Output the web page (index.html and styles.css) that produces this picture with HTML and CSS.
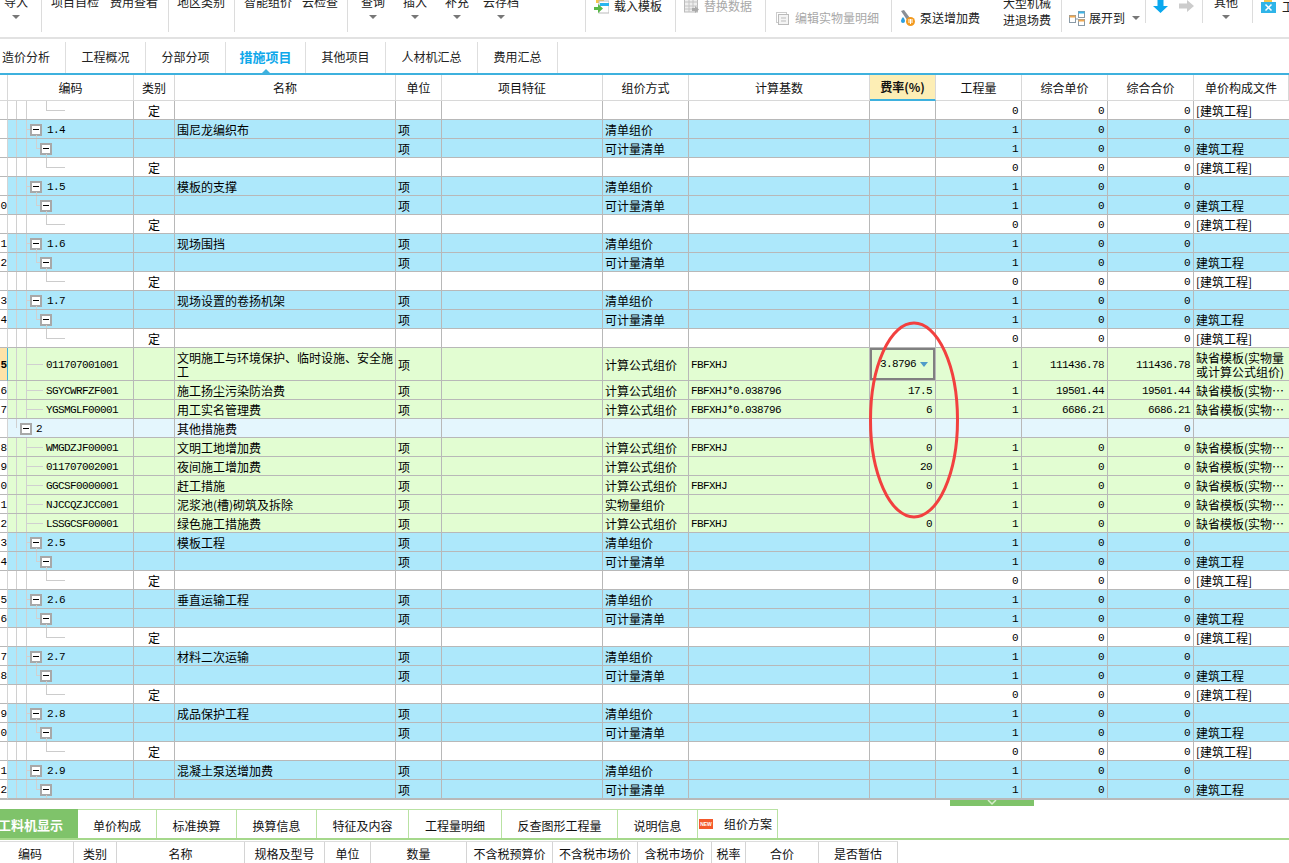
FILE: index.html
```html
<!DOCTYPE html>
<html lang="zh">
<head>
<meta charset="utf-8">
<title>措施项目</title>
<link rel="stylesheet" href="styles.css">
</head>
<body>
<header class="toolbar">
  <div class="grp g1"><div class="it"><span>导入</span><b class="arr"></b></div></div>
  <div class="grp g2"><div class="it"><span>项目自检</span></div><div class="it"><span>费用查看</span></div></div>
  <div class="grp g3"><div class="it"><span>地区类别</span></div></div>
  <div class="grp g4"><div class="it"><span>智能组价</span></div><div class="it"><span>云检查</span></div></div>
  <div class="grp g5"><div class="it two"><span>查询</span><b class="arr"></b></div><div class="it two"><span>插入</span><b class="arr"></b></div><div class="it two"><span>补充</span><b class="arr"></b></div><div class="it last"><span>云存档</span><b class="arr"></b></div></div>
  <div class="grp g6"><div class="row high">
    <svg width="15" height="16" viewBox="0 0 15 16"><rect x="2" y="0" width="8" height="5" fill="#f6c54a"/><rect x="5" y="3" width="10" height="12" fill="#fff" stroke="#bbb"/><rect x="6" y="5" width="9" height="3" fill="#29b6ee"/><path d="M0 9h4v-3l5 4.5-5 4.5v-3H0z" fill="#58b947"/></svg>
    <span>载入模板</span></div></div>
  <div class="grp g7"><div class="row high dis">
    <svg width="15" height="16" viewBox="0 0 15 16"><rect x=".5" y="-1" width="13" height="15" fill="#eee" stroke="#bbb"/><path d="M1 4h13M1 8h13M1 11h8M5 0v14M9 0v10" stroke="#c4c4c4"/><path d="M8 10h3V8l4 3.5-4 3.5v-2H8z" fill="#aaa"/></svg>
    <span>替换数据</span></div></div>
  <div class="grp g8"><div class="row low dis">
    <svg width="13" height="13" viewBox="0 0 13 13"><rect x=".5" y=".5" width="10" height="10" fill="#fff" stroke="#ccc"/><rect x="2.5" y="2.5" width="10" height="10" fill="#f4f4f4" stroke="#bbb"/><path d="M5 6h5M5 9h5" stroke="#bbb"/></svg>
    <span>编辑实物量明细</span></div></div>
  <div class="grp g9"><div class="row low pump">
    <svg width="15" height="16" viewBox="0 0 15 16"><path d="M1 1l3-1 6 8-3 2z" fill="#8a8f96"/><path d="M3 7c1.500 2 2 3 2 4a2 2 0 0 1-4 0c0-1 .5-2 2-4z" fill="#2a9fe0"/><circle cx="10.500" cy="11.500" r="4.500" fill="#f29a1f"/><path d="M8 10h5M8 12h5M10.500 9v5" stroke="#fff"/></svg>
    <span>泵送增加费</span></div>
    <div class="stack"><span>大型机械</span><span>进退场费</span></div></div>
  <div class="grp g10 short"><div class="row low">
    <svg width="16" height="15" viewBox="0 0 16 15"><rect x=".5" y="4.500" width="6" height="7" fill="#fff" stroke="#8a9aa6"/><rect x=".5" y="4.500" width="6" height="2" fill="#f0a850"/><rect x="9.500" y=".5" width="6" height="6" fill="#fff" stroke="#8a9aa6"/><rect x="9.500" y=".5" width="6" height="2" fill="#3db4e8"/><rect x="9.500" y="8.500" width="6" height="6" fill="#fff" stroke="#8a9aa6"/><rect x="9.500" y="8.500" width="6" height="2" fill="#f0a850"/><path d="M7 8h2" stroke="#8a9aa6"/></svg>
    <span>展开到</span></div><b class="arr side"></b></div>
  <div class="grp g11 short">
    <svg width="15" height="13" viewBox="0 0 15 13"><path d="M4.500 0h6v6H15l-7.500 7L0 6h4.500z" fill="#0aa8ee"/></svg>
    <svg width="15" height="12" viewBox="0 0 15 12"><path d="M0 3.500h8V0l7 6-7 6V8.500H0z" fill="#ccc"/></svg>
  </div>
  <div class="grp g12 short"><div class="it"><span>其他</span><b class="arr"></b></div></div>
  <div class="grp g13"><div class="row mid">
    <svg width="15" height="16" viewBox="0 0 15 16"><rect x="3" y="0" width="8" height="4" fill="#f6c54a"/><rect x="0" y="3" width="15" height="11" fill="#2fb4e8"/><path d="M4.500 5.500l6 6M10.500 5.500l-6 6" stroke="#fff" stroke-width="1.500"/></svg>
    <span>工程</span></div></div>
</header>

<nav class="tabs">
  <div class="tab first">造价分析</div>
  <div class="tab">工程概况</div>
  <div class="tab">分部分项</div>
  <div class="tab on">措施项目</div>
  <div class="tab">其他项目</div>
  <div class="tab wide">人材机汇总</div>
  <div class="tab">费用汇总</div>
</nav>

<main class="grid">
<table>
<colgroup><col class="c0"><col class="c1"><col class="c2"><col class="c3"><col class="c4"><col class="c5"><col class="c6"><col class="c7"><col class="c8"><col class="c9"><col class="c9"><col class="c9"><col class="c10"></colgroup>
<thead><tr><th></th><th>编码</th><th>类别</th><th>名称</th><th>单位</th><th>项目特征</th><th>组价方式</th><th>计算基数</th><th class="hl">费率(%)</th><th>工程量</th><th>综合单价</th><th>综合合价</th><th>单价构成文件</th></tr></thead>
<tbody>
<tr class="def"><td class="gut"></td><td class="cd"></td><td class="ct">定</td><td></td><td></td><td></td><td></td><td></td><td></td><td class="n">0</td><td class="n">0</td><td class="n">0</td><td>[建筑工程]</td></tr>
<tr class="blue"><td class="gut"></td><td class="cd top"><i class="box"></i>1.4</td><td></td><td>围尼龙编织布</td><td>项</td><td></td><td>清单组价</td><td></td><td></td><td class="n">1</td><td class="n">0</td><td class="n">0</td><td></td></tr>
<tr class="blue"><td class="gut"></td><td class="cd sub"><i class="box"></i></td><td></td><td></td><td>项</td><td></td><td>可计量清单</td><td></td><td></td><td class="n">1</td><td class="n">0</td><td class="n">0</td><td>建筑工程</td></tr>
<tr class="def"><td class="gut"></td><td class="cd"></td><td class="ct">定</td><td></td><td></td><td></td><td></td><td></td><td></td><td class="n">0</td><td class="n">0</td><td class="n">0</td><td>[建筑工程]</td></tr>
<tr class="blue"><td class="gut"></td><td class="cd top"><i class="box"></i>1.5</td><td></td><td>模板的支撑</td><td>项</td><td></td><td>清单组价</td><td></td><td></td><td class="n">1</td><td class="n">0</td><td class="n">0</td><td></td></tr>
<tr class="blue"><td class="gut">0</td><td class="cd sub"><i class="box"></i></td><td></td><td></td><td>项</td><td></td><td>可计量清单</td><td></td><td></td><td class="n">1</td><td class="n">0</td><td class="n">0</td><td>建筑工程</td></tr>
<tr class="def"><td class="gut"></td><td class="cd"></td><td class="ct">定</td><td></td><td></td><td></td><td></td><td></td><td></td><td class="n">0</td><td class="n">0</td><td class="n">0</td><td>[建筑工程]</td></tr>
<tr class="blue"><td class="gut">1</td><td class="cd top"><i class="box"></i>1.6</td><td></td><td>现场围挡</td><td>项</td><td></td><td>清单组价</td><td></td><td></td><td class="n">1</td><td class="n">0</td><td class="n">0</td><td></td></tr>
<tr class="blue"><td class="gut">2</td><td class="cd sub"><i class="box"></i></td><td></td><td></td><td>项</td><td></td><td>可计量清单</td><td></td><td></td><td class="n">1</td><td class="n">0</td><td class="n">0</td><td>建筑工程</td></tr>
<tr class="def"><td class="gut"></td><td class="cd"></td><td class="ct">定</td><td></td><td></td><td></td><td></td><td></td><td></td><td class="n">0</td><td class="n">0</td><td class="n">0</td><td>[建筑工程]</td></tr>
<tr class="blue"><td class="gut">3</td><td class="cd top"><i class="box"></i>1.7</td><td></td><td>现场设置的卷扬机架</td><td>项</td><td></td><td>清单组价</td><td></td><td></td><td class="n">1</td><td class="n">0</td><td class="n">0</td><td></td></tr>
<tr class="blue"><td class="gut">4</td><td class="cd sub"><i class="box"></i></td><td></td><td></td><td>项</td><td></td><td>可计量清单</td><td></td><td></td><td class="n">1</td><td class="n">0</td><td class="n">0</td><td>建筑工程</td></tr>
<tr class="def"><td class="gut"></td><td class="cd"></td><td class="ct">定</td><td></td><td></td><td></td><td></td><td></td><td></td><td class="n">0</td><td class="n">0</td><td class="n">0</td><td>[建筑工程]</td></tr>
<tr class="green tall"><td class="gut cur">5</td><td class="cd item">011707001001</td><td></td><td class="wrap">文明施工与环境保护、临时设施、安全施工</td><td>项</td><td></td><td>计算公式组价</td><td class="m">FBFXHJ</td><td class="sel"><div class="selbox">3.8796<b class="tri"></b></div></td><td class="n">1</td><td class="n">111436.78</td><td class="n">111436.78</td><td class="wrap">缺省模板(实物量或计算公式组价)</td></tr>
<tr class="green"><td class="gut">6</td><td class="cd item">SGYCWRFZF001</td><td></td><td>施工扬尘污染防治费</td><td>项</td><td></td><td>计算公式组价</td><td class="m">FBFXHJ*0.038796</td><td class="n">17.5</td><td class="n">1</td><td class="n">19501.44</td><td class="n">19501.44</td><td>缺省模板(实物⋯</td></tr>
<tr class="green"><td class="gut">7</td><td class="cd item">YGSMGLF00001</td><td></td><td>用工实名管理费</td><td>项</td><td></td><td>计算公式组价</td><td class="m">FBFXHJ*0.038796</td><td class="n">6</td><td class="n">1</td><td class="n">6686.21</td><td class="n">6686.21</td><td>缺省模板(实物⋯</td></tr>
<tr class="pale"><td class="gut"></td><td class="cd lvl"><i class="box"></i>2</td><td></td><td>其他措施费</td><td></td><td></td><td></td><td></td><td></td><td></td><td></td><td class="n">0</td><td></td></tr>
<tr class="green"><td class="gut">8</td><td class="cd item">WMGDZJF00001</td><td></td><td>文明工地增加费</td><td>项</td><td></td><td>计算公式组价</td><td class="m">FBFXHJ</td><td class="n">0</td><td class="n">1</td><td class="n">0</td><td class="n">0</td><td>缺省模板(实物⋯</td></tr>
<tr class="green"><td class="gut">9</td><td class="cd item">011707002001</td><td></td><td>夜间施工增加费</td><td>项</td><td></td><td>计算公式组价</td><td></td><td class="n">20</td><td class="n">1</td><td class="n">0</td><td class="n">0</td><td>缺省模板(实物⋯</td></tr>
<tr class="green"><td class="gut">0</td><td class="cd item">GGCSF0000001</td><td></td><td>赶工措施</td><td>项</td><td></td><td>计算公式组价</td><td class="m">FBFXHJ</td><td class="n">0</td><td class="n">1</td><td class="n">0</td><td class="n">0</td><td>缺省模板(实物⋯</td></tr>
<tr class="green"><td class="gut">1</td><td class="cd item">NJCCQZJCC001</td><td></td><td>泥浆池(槽)砌筑及拆除</td><td>项</td><td></td><td>实物量组价</td><td></td><td></td><td class="n">1</td><td class="n">0</td><td class="n">0</td><td>缺省模板(实物⋯</td></tr>
<tr class="green"><td class="gut">2</td><td class="cd item">LSSGCSF00001</td><td></td><td>绿色施工措施费</td><td>项</td><td></td><td>计算公式组价</td><td class="m">FBFXHJ</td><td class="n">0</td><td class="n">1</td><td class="n">0</td><td class="n">0</td><td>缺省模板(实物⋯</td></tr>
<tr class="blue"><td class="gut">3</td><td class="cd top"><i class="box"></i>2.5</td><td></td><td>模板工程</td><td>项</td><td></td><td>清单组价</td><td></td><td></td><td class="n">1</td><td class="n">0</td><td class="n">0</td><td></td></tr>
<tr class="blue"><td class="gut">4</td><td class="cd sub"><i class="box"></i></td><td></td><td></td><td>项</td><td></td><td>可计量清单</td><td></td><td></td><td class="n">1</td><td class="n">0</td><td class="n">0</td><td>建筑工程</td></tr>
<tr class="def"><td class="gut"></td><td class="cd"></td><td class="ct">定</td><td></td><td></td><td></td><td></td><td></td><td></td><td class="n">0</td><td class="n">0</td><td class="n">0</td><td>[建筑工程]</td></tr>
<tr class="blue"><td class="gut">5</td><td class="cd top"><i class="box"></i>2.6</td><td></td><td>垂直运输工程</td><td>项</td><td></td><td>清单组价</td><td></td><td></td><td class="n">1</td><td class="n">0</td><td class="n">0</td><td></td></tr>
<tr class="blue"><td class="gut">6</td><td class="cd sub"><i class="box"></i></td><td></td><td></td><td>项</td><td></td><td>可计量清单</td><td></td><td></td><td class="n">1</td><td class="n">0</td><td class="n">0</td><td>建筑工程</td></tr>
<tr class="def"><td class="gut"></td><td class="cd"></td><td class="ct">定</td><td></td><td></td><td></td><td></td><td></td><td></td><td class="n">0</td><td class="n">0</td><td class="n">0</td><td>[建筑工程]</td></tr>
<tr class="blue"><td class="gut">7</td><td class="cd top"><i class="box"></i>2.7</td><td></td><td>材料二次运输</td><td>项</td><td></td><td>清单组价</td><td></td><td></td><td class="n">1</td><td class="n">0</td><td class="n">0</td><td></td></tr>
<tr class="blue"><td class="gut">8</td><td class="cd sub"><i class="box"></i></td><td></td><td></td><td>项</td><td></td><td>可计量清单</td><td></td><td></td><td class="n">1</td><td class="n">0</td><td class="n">0</td><td>建筑工程</td></tr>
<tr class="def"><td class="gut"></td><td class="cd"></td><td class="ct">定</td><td></td><td></td><td></td><td></td><td></td><td></td><td class="n">0</td><td class="n">0</td><td class="n">0</td><td>[建筑工程]</td></tr>
<tr class="blue"><td class="gut">9</td><td class="cd top"><i class="box"></i>2.8</td><td></td><td>成品保护工程</td><td>项</td><td></td><td>清单组价</td><td></td><td></td><td class="n">1</td><td class="n">0</td><td class="n">0</td><td></td></tr>
<tr class="blue"><td class="gut">0</td><td class="cd sub"><i class="box"></i></td><td></td><td></td><td>项</td><td></td><td>可计量清单</td><td></td><td></td><td class="n">1</td><td class="n">0</td><td class="n">0</td><td>建筑工程</td></tr>
<tr class="def"><td class="gut"></td><td class="cd"></td><td class="ct">定</td><td></td><td></td><td></td><td></td><td></td><td></td><td class="n">0</td><td class="n">0</td><td class="n">0</td><td>[建筑工程]</td></tr>
<tr class="blue"><td class="gut">1</td><td class="cd top"><i class="box"></i>2.9</td><td></td><td>混凝土泵送增加费</td><td>项</td><td></td><td>清单组价</td><td></td><td></td><td class="n">1</td><td class="n">0</td><td class="n">0</td><td></td></tr>
<tr class="blue"><td class="gut">2</td><td class="cd sub"><i class="box"></i></td><td></td><td></td><td>项</td><td></td><td>可计量清单</td><td></td><td></td><td class="n">1</td><td class="n">0</td><td class="n">0</td><td>建筑工程</td></tr>
</tbody>
</table>
</main>

<div class="split"><div class="handle"><svg width="14" height="6" viewBox="0 0 14 6"><path d="M3 0l4 4 4-4" fill="none" stroke="#d6eccb" stroke-width="1.500"/></svg></div></div>

<nav class="btabs">
  <div class="bt act">工料机显示</div>
  <div class="bt w79">单价构成</div>
  <div class="bt">标准换算</div>
  <div class="bt">换算信息</div>
  <div class="bt w92">特征及内容</div>
  <div class="bt w93">工程量明细</div>
  <div class="bt w116">反查图形工程量</div>
  <div class="bt">说明信息</div>
  <div class="bt plan"><span class="new">NEW</span>组价方案</div>
</nav>

<div class="bhead">
  <div class="bfirst">编码</div><div>类别</div><div>名称</div><div>规格及型号</div><div>单位</div><div>数量</div><div>不含税预算价</div><div>不含税市场价</div><div>含税市场价</div><div>税率</div><div>合价</div><div>是否暂估</div>
</div>

<svg class="ring" width="96" height="202" viewBox="0 0 96 202"><ellipse cx="48" cy="101" rx="43.500" ry="97" fill="none" stroke="#f2403f" stroke-width="3"/></svg>
</body>
</html>
```

FILE: styles.css
```css
* { box-sizing: border-box; }
html, body { margin: 0; padding: 0; }
body {
  position: relative;
  width: 1289px;
  height: 863px;
  overflow: hidden;
  background: #fff;
  color: #1a1a1a;
  font: 12px/14px "Noto Sans CJK SC", sans-serif;
}

/* toolbar */
.toolbar {
  display: flex;
  height: 39px;
  border-bottom: 2px solid #e2e2e2;
  overflow: hidden;
  color: #222;
}
.grp { display: flex; height: 32px; border-right: 1px solid #dcdcdc; flex: none; }
.grp.short { height: 23px; }
.g1 { width: 42px; padding-left: 4px; }
.g2 { width: 127px; padding-left: 9px; gap: 11px; }
.g3 { width: 66px; padding-left: 8px; }
.g4 { width: 113px; padding-left: 9px; gap: 10px; }
.g5 { width: 238px; padding-left: 11px; gap: 14px; }
.g6 { width: 90px; padding-left: 8px; }
.g7 { width: 90px; padding-left: 8px; }
.g8 { width: 126px; padding-left: 10px; }
.g9 { width: 170px; padding-left: 8px; gap: 23px; }
.g10 { width: 84px; padding-left: 7px; }
.g11 { width: 57px; padding-left: 7px; gap: 11px; }
.g12 { width: 50px; padding-left: 11px; }
.g13 { width: 36px; height: 37px; padding-left: 8px; border-right: 0; overflow: hidden; }
.it { display: flex; flex-direction: column; align-items: center; margin-top: -5px; }
.it.two { width: 28px; }
.it.last { margin-left: -2px; }
.arr {
  width: 0;
  height: 0;
  margin-top: 6px;
  border: 4px solid transparent;
  border-top: 4px solid #777;
  border-bottom: 0;
}
.arr.side { margin: 16px 0 0 7px; }
.row { display: flex; align-items: center; gap: 5px; height: 14px; white-space: nowrap; }
.row svg { flex: none; }
.row.high { margin-top: -1px; }
.row.low { margin-top: 11px; }
.row.mid { margin-top: 0; gap: 6px; }
.g8 .row { gap: 6px; }
.g10 .row { gap: 4px; }
.dis { color: #a8a8a8; }
.stack { display: flex; flex-direction: column; gap: 3px; margin-top: -4px; }
.g11 svg { flex: none; }

/* main tabs */
.tabs {
  display: flex;
  height: 36px;
  padding-top: 3px;
  border-bottom: 2px solid #3eb1de;
  color: #222;
}
.tab {
  position: relative;
  width: 80px;
  height: 31px;
  line-height: 30px;
  text-align: center;
  border-right: 1px solid #dedede;
}
.tab.first { width: 66px; text-align: left; padding-left: 2px; }
.tab.wide { width: 92px; }
.tab.on { color: #0fa8ea; font-size: 13px; font-weight: 700; }
.tab.on::after {
  content: "";
  position: absolute;
  left: 36px;
  bottom: 0;
  border: 4px solid transparent;
  border-bottom: 4px solid #3eb1de;
  border-top: 0;
}

/* main grid */
.grid { height: 725px; overflow: hidden; border-bottom: 1px solid #b8b8b8; }
table {
  width: 1289px;
  table-layout: fixed;
  border-collapse: separate;
  border-spacing: 0;
}
.c0 { width: 8px; }
.c1 { width: 126px; }
.c2 { width: 41px; }
.c3 { width: 221px; }
.c4 { width: 46px; }
.c5 { width: 161px; }
.c6 { width: 86px; }
.c7 { width: 181px; }
.c8 { width: 66px; }
.c9 { width: 86px; }
.c10 { width: 95px; }
th {
  height: 26px;
  padding: 0;
  font-weight: 400;
  color: #111;
  border-right: 1px solid #d8d8d8;
  border-bottom: 1px solid #d8d8d8;
}
th.hl {
  background: #fdeeb5;
  font-weight: 700;
  border-bottom: 2px solid #3eb1de;
}
td {
  height: 19px;
  padding: 2px 0 0 2px;
  border-right: 1px solid #b8b8b8;
  border-bottom: 1px solid #b8b8b8;
  white-space: nowrap;
  overflow: hidden;
  color: #000;
}
td:last-child { border-right: 0; }
.blue td { background-color: #ade8fb; }
.green td { background-color: #e2fdd2; }
.pale td { background-color: #e4f6fd; }
.tall td { height: 33px; }
td.wrap { white-space: normal; line-height: 14px; }
td.ct { text-align: center; padding: 2px 0 0; }
td.n {
  padding: 2px 3px 0 0;
  text-align: right;
  font: 11px/14px "Liberation Mono", monospace;
  letter-spacing: -0.6px;
}
td.m {
  font: 11px/14px "Liberation Mono", monospace;
  letter-spacing: -0.6px;
}
td.gut {
  padding: 2px 0 0;
  background: #fff;
  text-align: right;
  font: 11px/14px "Liberation Mono", monospace;
  border-right: 1px solid #d4d4d4;
}
td.gut.cur {
  background: #fde3a8;
  font-weight: 700;
  border-right: 1px solid #3eb1de;
}
td.cd {
  position: relative;
  padding: 2px 0 0;
  font: 11px/14px "Liberation Mono", monospace;
  letter-spacing: -0.6px;
  background-image:
    linear-gradient(#d0d0d0, #d0d0d0),
    linear-gradient(#d0d0d0, #d0d0d0);
  background-size: 1px 100%, 1px 100%;
  background-position: 8px 0, 18px 0;
  background-repeat: no-repeat;
}
.box {
  position: relative;
  display: inline-block;
  width: 12px;
  height: 12px;
  margin-right: 5px;
  vertical-align: -3px;
  background: #fff;
  border: 2px solid #a8a8a8;
}
.box::after {
  content: "";
  position: absolute;
  left: 1px;
  top: 3px;
  width: 6px;
  height: 1px;
  background: #000;
}
.def .cd::before {
  content: "";
  position: absolute;
  left: 38px;
  top: 0;
  width: 18px;
  height: 9px;
  border-left: 1px solid #ccc;
  border-bottom: 1px solid #ccc;
}
td.cd.top { padding-left: 22px; }
td.cd.top::before {
  content: "";
  position: absolute;
  left: 18px;
  top: 9px;
  width: 4px;
  height: 1px;
  background: #d0d0d0;
}
td.cd.top::after {
  content: "";
  position: absolute;
  left: 28px;
  top: 15px;
  width: 1px;
  height: 4px;
  background: #d0d0d0;
}
td.cd.sub { padding-left: 32px; }
td.cd.sub::before {
  content: "";
  position: absolute;
  left: 28px;
  top: 0;
  width: 4px;
  height: 9px;
  border-left: 1px solid #d0d0d0;
  border-bottom: 1px solid #d0d0d0;
}
td.cd.sub::after {
  content: "";
  position: absolute;
  left: 38px;
  top: 15px;
  width: 1px;
  height: 4px;
  background: #d0d0d0;
}
td.cd.item { padding-left: 38px; }
td.cd.item::before {
  content: "";
  position: absolute;
  left: 18px;
  top: 50%;
  width: 17px;
  height: 1px;
  background: #d0d0d0;
}
td.cd.lvl {
  padding-left: 12px;
  background-image: linear-gradient(#d0d0d0, #d0d0d0);
  background-size: 1px 9px;
  background-position: 8px 0;
}
td.cd.lvl .box { margin-right: 4px; }
td.sel { padding: 0; }
.selbox {
  display: flex;
  align-items: center;
  justify-content: flex-end;
  height: 32px;
  padding-right: 5px;
  border: 2px solid #808080;
  font: 11px/14px "Liberation Mono", monospace;
  letter-spacing: -0.6px;
}
.tri {
  width: 0;
  height: 0;
  margin-left: 4px;
  border: 4px solid transparent;
  border-top: 5px solid #4f9bc9;
  border-bottom: 0;
}

/* splitter */
.split { height: 9px; padding-left: 950px; }
.handle {
  display: flex;
  justify-content: center;
  width: 84px;
  height: 6px;
  background: #7fc36a;
}

/* lower tabs */
.btabs {
  display: flex;
  height: 31px;
  border-bottom: 2px solid #a5d88b;
  color: #111;
}
.bt {
  width: 80px;
  line-height: 32px;
  text-align: center;
  border-top: 1px solid #b9e2a3;
  border-right: 1px solid #b9e2a3;
}
.bt.act {
  width: 78px;
  background: #7fc36a;
  border: 0;
  color: #fff;
  font-size: 13px;
  font-weight: 700;
  text-align: left;
  text-indent: -2px;
}
.bt.w79 { width: 79px; }
.bt.w92 { width: 92px; }
.bt.w93 { width: 93px; }
.bt.w116 { width: 116px; }
.bt.plan {
  display: flex;
  align-items: center;
  padding-left: 1px;
  gap: 11px;
}
.new {
  width: 14px;
  height: 10px;
  background: #f4592b;
  color: #fff;
  font: 700 5px/10px "Liberation Sans", sans-serif;
  text-align: center;
}

/* lower header */
.bhead {
  display: grid;
  grid-template-columns: 74px 43px 128px 80px 46px 96px 86px 85px 74px 34px 73px 79px;
  width: 898px;
  height: 22px;
  margin-top: 1px;
  border-top: 1px solid #dcdcdc;
  color: #111;
}
.bhead div {
  line-height: 23px;
  text-align: center;
  white-space: nowrap;
  border-right: 1px solid #d4d4d4;
}
.bhead .bfirst { padding-right: 13px; }

/* hand-drawn annotation over the grid */
.ring {
  position: absolute;
  left: 866px;
  top: 319px;
}
```
